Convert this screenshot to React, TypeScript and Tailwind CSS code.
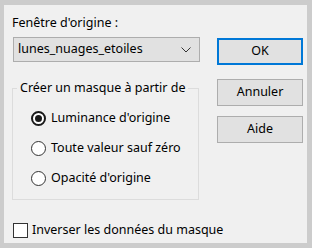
import React from "react";

function Radio({ checked, label }: { checked?: boolean; label: string }) {
  return (
    <div className="flex items-center h-[30px] whitespace-nowrap">
      <div
        className={
          "w-[15px] h-[15px] rounded-full bg-white flex items-center justify-center shrink-0 " +
          (checked ? "border-2 border-[#1a1a1a]" : "border border-[#333333]")
        }
      >
        {checked && <div className="w-[7px] h-[7px] rounded-full bg-[#1a1a1a]" />}
      </div>
      <span className="ml-[5px]">{label}</span>
    </div>
  );
}

function Btn({ label, primary }: { label: string; primary?: boolean }) {
  return (
    <div
      className={
        "w-[86px] h-[27px] bg-[#e1e1e1] flex items-center justify-center " +
        (primary ? "border-2 border-[#0078d7]" : "border border-[#adadad]")
      }
    >
      {label}
    </div>
  );
}

export default function App() {
  return (
    <div
      className="w-[312px] h-[248px] bg-[#cccccc] pt-[5px] pl-[4px] pr-[5px] pb-[5px] text-[12.5px] text-black"
      style={{ fontFamily: '"Noto Sans", "Open Sans", sans-serif' }}
    >
      <div className="w-full h-full bg-[#f0f0f0] flex">
        <div className="flex flex-col pl-[8px] w-[200px] shrink-0">
          <div className="mt-[9px] leading-[18px] whitespace-nowrap">Fenêtre d'origine :</div>
          <div className="mt-[5px] ml-[1px] w-[187px] h-[25px] bg-[#e1e1e1] border border-[#adadad] flex items-center justify-between pl-[4px] pr-[8px]">
            <span className="whitespace-nowrap">lunes_nuages_etoiles</span>
            <svg width="10" height="6" viewBox="0 0 10 6">
              <path d="M0.5 0.5 L5 5 L9.5 0.5" fill="none" stroke="#333" strokeWidth="1" />
            </svg>
          </div>
          <div className="mt-[26px] w-[187px] h-[112px] border border-[#dcdcdc] flex flex-col">
            <div className="-mt-[10px] ml-[4px] self-start px-[3px] leading-[18px] whitespace-nowrap bg-[#f0f0f0]">
              Créer un masque à partir de
            </div>
            <div className="mt-[6px] pl-[18px] flex flex-col">
              <Radio checked label="Luminance d'origine" />
              <Radio label="Toute valeur sauf zéro" />
              <Radio label="Opacité d'origine" />
            </div>
          </div>
          <div className="mt-[23px] ml-[1px] h-[15px] flex items-center whitespace-nowrap">
            <div className="w-[15px] h-[15px] bg-white border border-[#333333] shrink-0" />
            <span className="ml-[4px]">Inverser les données du masque</span>
          </div>
        </div>
        <div className="flex flex-col ml-[13px] mt-[33px] gap-[14px]">
          <Btn primary label="OK" />
          <Btn label="Annuler" />
          <div className="-mt-[4px]">
            <Btn label="Aide" />
          </div>
        </div>
      </div>
    </div>
  );
}
